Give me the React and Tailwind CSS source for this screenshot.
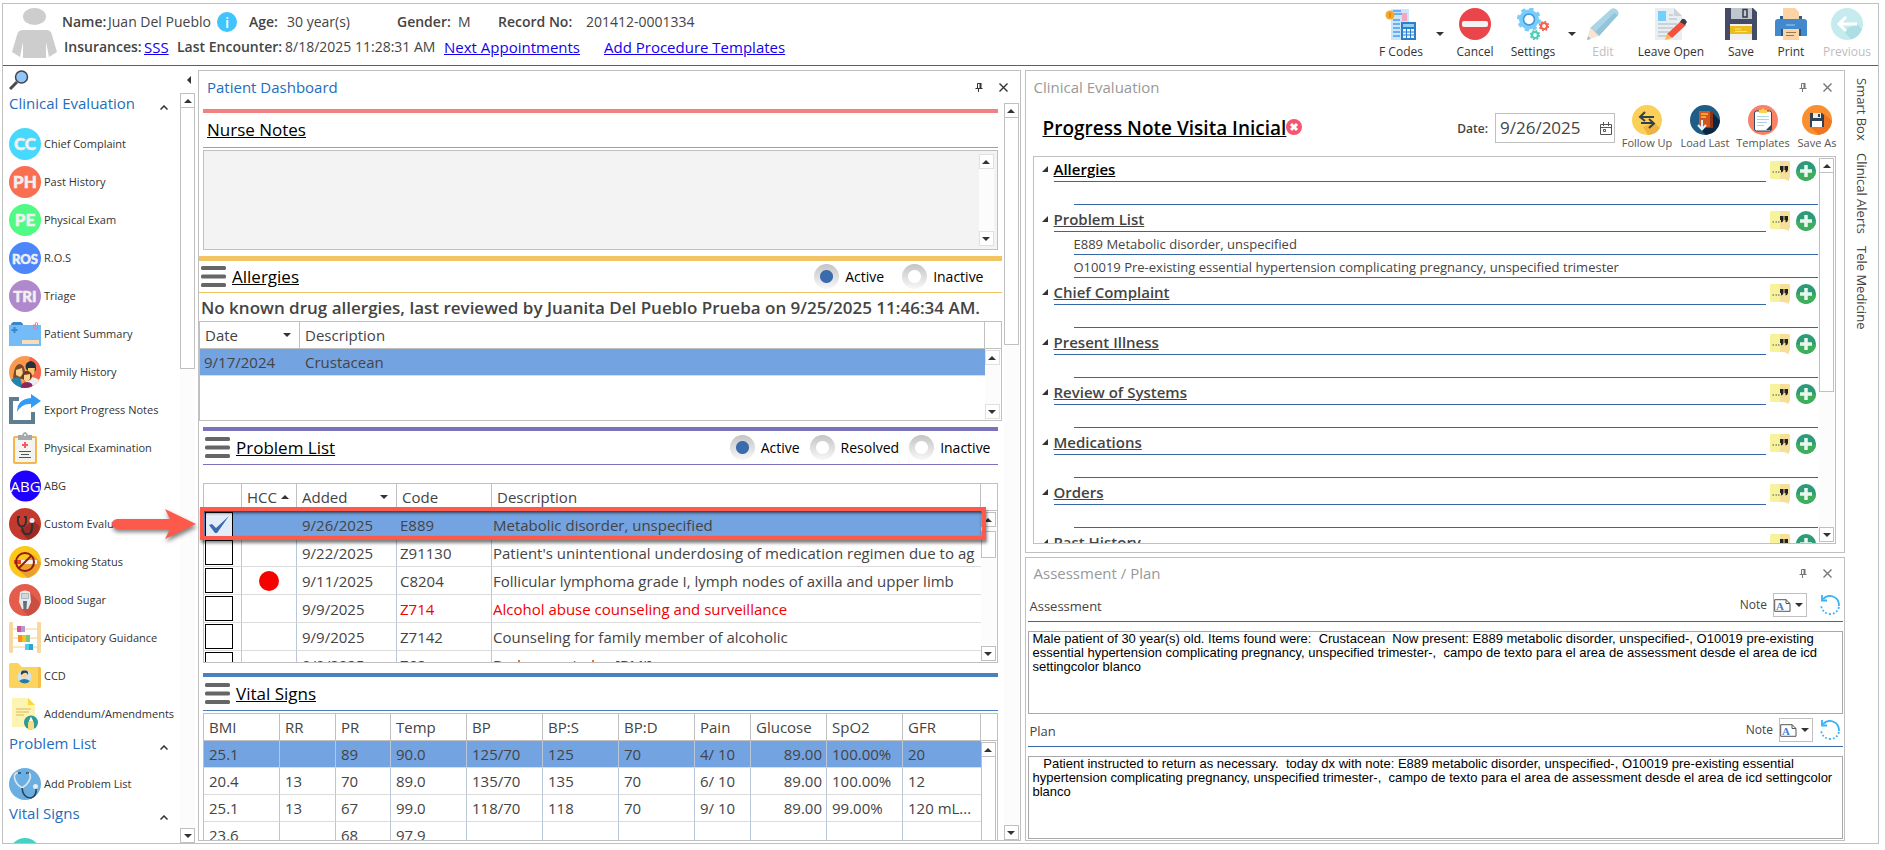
import React, { useState } from 'react';

const sidebarSections = [
  {
    title: 'Clinical Evaluation',
    items: [
      { label: 'Chief Complaint', icon: 'cc' },
      { label: 'Past History', icon: 'ph' },
      { label: 'Physical Exam', icon: 'pe' },
      { label: 'R.O.S', icon: 'ros' },
      { label: 'Triage', icon: 'tri' },
      { label: 'Patient Summary', icon: 'summary' },
      { label: 'Family History', icon: 'family' },
      { label: 'Export Progress Notes', icon: 'export' },
      { label: 'Physical Examination', icon: 'clipboard' },
      { label: 'ABG', icon: 'abg' },
      { label: 'Custom Evaluation', icon: 'custom' },
      { label: 'Smoking Status', icon: 'smoking' },
      { label: 'Blood Sugar', icon: 'sugar' },
      { label: 'Anticipatory Guidance', icon: 'abacus' },
      { label: 'CCD', icon: 'ccd' },
      { label: 'Addendum/Amendments', icon: 'addendum' },
    ],
  },
  { title: 'Problem List', items: [{ label: 'Add Problem List', icon: 'stethoscope' }] },
  { title: 'Vital Signs', items: [{ label: '', icon: 'vitals' }] },
];

const problems = [
  { hcc: false, added: '9/26/2025', code: 'E889', description: 'Metabolic disorder, unspecified' },
  { hcc: false, added: '9/22/2025', code: 'Z91130', description: "Patient's unintentional underdosing of medication regimen due to ag" },
  { hcc: true, added: '9/11/2025', code: 'C8204', description: 'Follicular lymphoma grade I, lymph nodes of axilla and upper limb' },
  { hcc: false, added: '9/9/2025', code: 'Z714', description: 'Alcohol abuse counseling and surveillance', alert: true },
  { hcc: false, added: '9/9/2025', code: 'Z7142', description: 'Counseling for family member of alcoholic' },
  { hcc: false, added: '9/9/2025', code: 'Z68', description: 'Body mass index [BMI]', alert: true },
];

const vitalColumns = ['BMI', 'RR', 'PR', 'Temp', 'BP', 'BP:S', 'BP:D', 'Pain', 'Glucose', 'SpO2', 'GFR'];
const vitals = [
  ['25.1', '', '89', '90.0', '125/70', '125', '70', '4/ 10', '89.00', '100.00%', '20'],
  ['20.4', '13', '70', '89.0', '135/70', '135', '70', '6/ 10', '89.00', '100.00%', '12'],
  ['25.1', '13', '67', '99.0', '118/70', '118', '70', '9/ 10', '89.00', '99.00%', '120 mL...'],
  ['23.6', '', '68', '97.9', '', '', '', '', '', '', ''],
];

const noteSections = [
  { title: 'Allergies', lines: [''] },
  {
    title: 'Problem List',
    lines: [
      'E889 Metabolic disorder, unspecified',
      'O10019 Pre-existing essential hypertension complicating pregnancy, unspecified trimester',
    ],
  },
  { title: 'Chief Complaint', lines: [''] },
  { title: 'Present Illness', lines: [''] },
  { title: 'Review of Systems', lines: [''] },
  { title: 'Medications', lines: [''] },
  { title: 'Orders', lines: [''] },
  { title: 'Past History', lines: [''] },
];

/* ---------- small glyphs ---------- */

function Caret({ up, className = '' }) {
  return (
    <svg viewBox="0 0 8 4" className={`w-2 h-1 shrink-0 ${className}`} fill="#333">
      <path d={up ? 'M0 4L4 0L8 4Z' : 'M0 0L4 4L8 0Z'} />
    </svg>
  );
}

function Pin() {
  return (
    <svg viewBox="0 0 8 9" className="w-2 h-[9px]" fill="none" stroke="currentColor">
      <path d="M2.5 5V.5H6M.5 5.5H7.5M3.5 6V9" />
      <path d="M5.5 0V5" strokeWidth="2" />
    </svg>
  );
}

function Cross() {
  return (
    <svg viewBox="0 0 9 9" className="w-[9px] h-[9px]" fill="none" stroke="currentColor" strokeWidth="1.4">
      <path d="M.5 .5L8.5 8.5M8.5 .5L.5 8.5" />
    </svg>
  );
}

function ScrollBar({ thumb = '', edge = 'border-[#c0c0c0]', className = '' }) {
  return (
    <div className={`flex flex-col w-[15px] shrink-0 bg-[#fcfcfc] ${className}`}>
      <button className={`flex items-center justify-center h-[15px] shrink-0 bg-white border ${edge}`} aria-label="Scroll up">
        <Caret up />
      </button>
      {thumb && <div className={`-mt-px bg-white border ${edge} ${thumb}`}></div>}
      <div className="flex-1"></div>
      <button className={`flex items-center justify-center h-[15px] shrink-0 bg-white border ${edge}`} aria-label="Scroll down">
        <Caret />
      </button>
    </div>
  );
}

function Menu() {
  return (
    <button aria-label="Menu" className="w-[25px] h-[21px] shrink-0">
      <svg viewBox="0 0 25 21" fill="#666">
        <rect width="25" height="4" rx="1.5" />
        <rect y="8.5" width="25" height="4" rx="1.5" />
        <rect y="17" width="25" height="4" rx="1.5" />
      </svg>
    </button>
  );
}

/* ---------- sidebar icons ---------- */

function Badge({ fill, text, size = 15 }) {
  return (
    <svg viewBox="0 0 32 32" className="w-8 h-8 shrink-0">
      <circle cx="16" cy="16" r="16" fill={fill} />
      <text x="16" y="21.5" fontSize={size} fontWeight="900" fontFamily="Lato, sans-serif" fill="#f0f0f0" stroke="#f0f0f0" strokeWidth=".5" textAnchor="middle">{text}</text>
    </svg>
  );
}

const sidebarIcons = {
  cc: <Badge fill="#46d9fb" text="CC" size={17} />,
  ph: <Badge fill="#f96f51" text="PH" size={17} />,
  pe: <Badge fill="#4ffb84" text="PE" size={17} />,
  ros: <Badge fill="#4d86fb" text="ROS" size={13} />,
  tri: <Badge fill="#b088cc" text="TRI" size={15} />,
  vitals: <Badge fill="#45d1c4" text="" />,
  abg: (
    <svg viewBox="0 0 32 32" className="w-8 h-8 shrink-0">
      <circle cx="16.5" cy="16" r="15.5" fill="#1f00ff" />
      <text x="16.5" y="21.5" fontSize="15" fontFamily="Open Sans, sans-serif" fill="#fff" textAnchor="middle">ABG</text>
    </svg>
  ),
  summary: (
    <svg viewBox="0 0 32 32" className="w-8 h-8 shrink-0">
      <path d="M2 6L4 4H12L14 6V9H2Z" fill="#3a87c8" />
      <path d="M0 7H32V28H0Z" fill="#74bcf8" />
      <path d="M5.5 9V15M2.5 12H8.5" stroke="#3a87c8" strokeWidth="2" />
      <path d="M13 22H30V26H13Z" fill="#fbdcb4" />
      <path d="M25 6V10.5Q27 12.5 28.5 10.5V5Q27 3.5 26.5 5V9" fill="none" stroke="#e57e95" />
    </svg>
  ),
  family: (
    <svg viewBox="0 0 32 32" className="w-8 h-8 shrink-0">
      <clipPath id="familyClip"><circle cx="16" cy="16" r="16" /></clipPath>
      <g clipPath="url(#familyClip)">
        <path d="M0 0H32V32H0Z" fill="#fb9a4e" />
        <path d="M21 0H32V32H14Z" fill="#f8674b" />
        <path d="M16 30Q16 21 23 21Q31 22 32 29V32H16Z" fill="#efefef" />
        <path d="M17 13Q15 6 22 5Q28 6 27 14L23 18Z" fill="#27303f" />
        <path d="M19 12H26L25 18L22 20L19 17Z" fill="#fcc568" />
        <path d="M4 23Q5 8 11 8Q17 9 16 23Z" fill="#7b4a2a" />
        <path d="M7 14L13 12L14 18L11 21L7 19Z" fill="#fdd28a" />
        <path d="M2 24Q6 20 11 22L14 32H2Z" fill="#2183ae" />
        <circle cx="18" cy="20" r="5" fill="#6d3a26" />
        <path d="M15 19L21 18V23L18 26L15 24Z" fill="#fdd28a" />
        <path d="M12 32Q12 26 18 26Q24 26 24 32Z" fill="#8b285b" />
      </g>
    </svg>
  ),
  export: (
    <svg viewBox="0 0 32 32" className="w-8 h-8 shrink-0">
      <path d="M10 5H2V28H24V18" fill="none" stroke="#5d7e90" strokeWidth="4" />
      <path d="M8 18Q8 5 22 4V0L32 7L22 14V10Q13 9 8 18Z" fill="#339af8" />
    </svg>
  ),
  clipboard: (
    <svg viewBox="0 0 32 32" className="w-8 h-8 shrink-0">
      <rect x="5" y="5" width="22" height="26" rx="1" fill="#f3f3f0" stroke="#f6b64a" strokeWidth="2" />
      <path d="M9 3H13Q16 -3 19 3H23V8H9Z" fill="#a2a8ac" />
      <circle cx="16" cy="3" r="1" fill="#fff" />
      <path d="M16 10V16M13 13H19" stroke="#f25a6a" strokeWidth="2" />
      <path d="M10 19.5H22M12 22.5H20M10 25.5H22" stroke="#4a565e" />
    </svg>
  ),
  custom: (
    <svg viewBox="0 0 32 32" className="w-8 h-8 shrink-0">
      <circle cx="16" cy="16" r="16" fill="#c4392e" />
      <path d="M24 12L31 19Q29 29 19 32L11 23Z" fill="#9c2b25" />
      <path d="M11 9H9Q8 18 13 18.5Q18 18 17 9H15M13 19Q14 28 20 26Q24 24 23 14" fill="none" stroke="#30302f" strokeWidth="2" />
      <circle cx="23" cy="12.5" r="2.5" fill="#e9e9e9" />
    </svg>
  ),
  smoking: (
    <svg viewBox="0 0 32 32" className="w-8 h-8 shrink-0">
      <circle cx="16" cy="16" r="16" fill="#fcc81c" />
      <path d="M25 9L32 17Q29 29 19 32L9 24Z" fill="#eaa030" />
      <path d="M5 14H12V18H5Z" fill="#e2452f" />
      <path d="M12 14H28V18H12Z" fill="#f1f1f1" />
      <circle cx="16" cy="16" r="9" fill="none" stroke="#921c10" strokeWidth="2" />
      <path d="M22 10L10 22" stroke="#921c10" strokeWidth="2" />
    </svg>
  ),
  sugar: (
    <svg viewBox="0 0 32 32" className="w-8 h-8 shrink-0">
      <circle cx="16" cy="16" r="16" fill="#e45c4c" />
      <path d="M21 8L31 19Q28 29 19 32L13 25Z" fill="#c84f41" />
      <path d="M11 8Q16 5 21 8L22 18L19 25H13L10 18Z" fill="#e8eaea" />
      <path d="M12 9H20V15H12Z" fill="#a9bac4" />
      <path d="M14 17H18L17.5 25H14.5Z" fill="#5d7180" />
      <path d="M13 11H19M13 13H19" stroke="#f6f6f6" />
    </svg>
  ),
  abacus: (
    <svg viewBox="0 0 32 32" className="w-8 h-8 shrink-0">
      <path d="M4 7H28M4 16H28M4 25H28" stroke="#f1d089" />
      <rect width="4" height="31" rx="1" fill="#f5d9a0" />
      <rect x="28" width="4" height="31" rx="1" fill="#f5d9a0" />
      <rect x="8" y="4" width="4" height="6" fill="#cc56a1" />
      <rect x="12" y="4" width="4" height="6" fill="#b697cf" />
      <rect x="9" y="13" width="4" height="7" fill="#f98e26" />
      <rect x="13" y="13" width="4" height="7" fill="#fbbf23" />
      <rect x="17" y="13" width="4" height="7" fill="#7bc67a" />
      <rect x="16" y="22" width="4" height="6" fill="#4bcdee" />
      <rect x="20" y="22" width="4" height="6" fill="#2aa6cf" />
    </svg>
  ),
  ccd: (
    <svg viewBox="0 0 32 32" className="w-8 h-8 shrink-0">
      <path d="M0 5Q0 3 2 3H9L13 7H30Q32 7 32 9V26Q32 28 30 28H2Q0 28 0 26Z" fill="#fcd35f" />
      <path d="M29 7H30Q32 7 32 9V26Q32 28 30 28H29Z" fill="#f7bd45" />
      <circle cx="15.5" cy="17" r="7" fill="#cbe6f0" />
      <path d="M10 21Q15 17 21 21Q16 26 10 21Z" fill="#2b7a9b" />
      <circle cx="15.5" cy="15" r="3" fill="#fbd19c" />
      <path d="M12 15Q11 10 15.5 10.5Q20 10 19 15Q18 12 15 13Z" fill="#2c4152" />
    </svg>
  ),
  addendum: (
    <svg viewBox="0 0 32 32" className="w-8 h-8 shrink-0">
      <path d="M3 0H19L26 7V29H3Z" fill="#fdf3b3" />
      <path d="M19 0L26 7H19Z" fill="#fbd83c" />
      <path d="M7 11H22M7 14H20M7 17H15" stroke="#d9b954" />
      <circle cx="22" cy="24.5" r="7" fill="#2c9c97" />
      <path d="M19 32V25L22 19L25 25V31Z" fill="#fbdb80" />
      <path d="M20 23L22 19L24 23Z" fill="#fff" />
    </svg>
  ),
  stethoscope: (
    <svg viewBox="0 0 32 32" className="w-8 h-8 shrink-0">
      <circle cx="16" cy="16" r="16" fill="#6bafe2" />
      <path d="M9 5H7Q3 9 9 17L13 20L17 17Q24 9 20 5H18" fill="none" stroke="#dfe7ec" strokeWidth="1.6" />
      <path d="M9 5H12M17 5H20M13 20Q14 30 22 30Q28 28 27 20" fill="none" stroke="#2d4356" strokeWidth="1.6" />
      <circle cx="26.5" cy="18.5" r="2.5" fill="#e5ebee" />
    </svg>
  ),
};

/* ---------- toolbar icons ---------- */

const toolbarIcons = {
  fcodes: (
    <svg viewBox="0 0 32 32" className="w-8 h-8">
      <path d="M6 1H24V32H6Z" fill="#c9e6fc" />
      <path d="M8 3H16M8 6H20M8 20H15M8 24H15M8 28H15M8 12H15M8 16H15" stroke="#4a9df0" strokeWidth="1.5" />
      <path d="M17 5H22V13H17Z" fill="#f6a5c1" />
      <circle cx="5" cy="7" r="4.5" fill="#f9a826" />
      <path d="M5 4.5V9.5" stroke="#c46f10" />
      <rect x="16" y="14" width="15" height="18" fill="#2d7fc9" />
      <path d="M18 16H29V19H18Z" fill="#8fd0f5" />
      <path d="M18 21H29V30H18Z" fill="#e9f5fd" />
      <path d="M21.5 21V30M25.5 21V30M18 24H29M18 27H29" stroke="#2d7fc9" />
    </svg>
  ),
  cancel: (
    <svg viewBox="0 0 32 32" className="w-8 h-8">
      <circle cx="16" cy="16" r="16" fill="#e9454b" />
      <rect x="3" y="13" width="26" height="6" rx="2" fill="#f3f3f3" />
    </svg>
  ),
  settings: (
    <svg viewBox="0 0 32 32" className="w-8 h-8" fill="none">
      <circle cx="12" cy="11.5" r="7.5" stroke="#79cdf8" strokeWidth="5" />
      <circle cx="12" cy="11.5" r="10.5" stroke="#79cdf8" strokeWidth="3" strokeDasharray="4.2 4.05" />
      <circle cx="12" cy="11.5" r="5.5" stroke="#4196df" strokeWidth="1.5" />
      <circle cx="27" cy="18" r="3" stroke="#f1634f" strokeWidth="2.2" />
      <circle cx="27" cy="18" r="4.5" stroke="#f1634f" strokeWidth="1.5" strokeDasharray="1.8 1.73" />
      <circle cx="18" cy="27" r="3" stroke="#4ecdb8" strokeWidth="2.2" />
      <circle cx="18" cy="27" r="4.5" stroke="#4ecdb8" strokeWidth="1.5" strokeDasharray="1.8 1.73" />
    </svg>
  ),
  edit: (
    <svg viewBox="0 0 32 32" className="w-8 h-8">
      <path d="M23 2Q25 -1 29 1Q33 4 31 7L12 28L3 20Z" fill="#a9d5e6" />
      <path d="M27 5L31 7L12 28L8 24Z" fill="#95c4d8" />
      <path d="M3 20L12 28L0 32Z" fill="#fbe3d3" />
      <path d="M1 28L4 31L0 32Z" fill="#a9bcc6" />
    </svg>
  ),
  leave: (
    <svg viewBox="0 0 32 32" className="w-8 h-8">
      <path d="M0 0H19L27 8V32H0Z" fill="#e9eef2" />
      <path d="M19 0L27 8H19Z" fill="#ccd2d8" />
      <rect x="3" y="3" width="8" height="10" fill="#72d0fb" />
      <path d="M14 7H18M14 11H22M3 16H22M3 20H18M3 24H14M3 28H12" stroke="#c2cad0" strokeWidth="1.5" />
      <path d="M26 13L31 17L17 30L12 26Z" fill="#f5513b" />
      <path d="M27 11Q30 10 32 14L30 17L25 14Z" fill="#3a3f47" />
      <path d="M12 26L17 30L10 32Z" fill="#f9b64b" />
    </svg>
  ),
  save: (
    <svg viewBox="0 0 32 32" className="w-8 h-8">
      <path d="M0 0H28L32 4V32H0Z" fill="#444b66" />
      <path d="M6 0H27V11H6Z" fill="#bfc6cc" />
      <path d="M18 1.5H22V9H18Z" fill="none" stroke="#343b50" strokeWidth="1.5" />
      <path d="M5 16H27V32H5Z" fill="#eef0f1" />
      <path d="M5 18H27V26H5Z" fill="#ecbc1c" />
      <path d="M10 21H16M10 23.5H22" stroke="#f8e38d" />
    </svg>
  ),
  print: (
    <svg viewBox="0 0 32 32" className="w-8 h-8">
      <path d="M8 0H20L24 4V12H8Z" fill="#fbd3a5" />
      <path d="M5 8H8V11H24V8H27V12H5Z" fill="#2f5c8f" />
      <path d="M0 14Q0 11 3 11H29Q32 11 32 14V28H0Z" fill="#4189cc" />
      <path d="M11 17H20" stroke="#9fd0f4" />
      <path d="M6 21H26V28H6Z" fill="#29557f" />
      <path d="M8 21H24V32H8Z" fill="#fbd3a5" />
      <path d="M11 24.5H21M11 27.5H19" stroke="#9c7850" />
    </svg>
  ),
  previous: (
    <svg viewBox="0 0 32 32" className="w-8 h-8">
      <circle cx="16" cy="16" r="16" fill="#c5ebee" />
      <path d="M26 16L31 21Q28 29 20 31.5L12 22Z" fill="#abdfe3" />
      <path d="M26 16H9M15 9L8 16L15 23" fill="none" stroke="#fff" strokeWidth="3" />
    </svg>
  ),
};

const noteIcons = {
  followUp: (
    <svg viewBox="0 0 30 30" className="w-[30px] h-[30px]">
      <circle cx="15" cy="15" r="15" fill="#fbcf58" />
      <path d="M22 18L28 23Q24 30 16 30L11 22Z" fill="#eeb345" />
      <path d="M22 12H9M13 7L8 12L13 16M9 18H21M17 14L22 18.5L17 23" fill="none" stroke="#33404c" strokeWidth="2" />
    </svg>
  ),
  loadLast: (
    <svg viewBox="0 0 30 30" className="w-[30px] h-[30px]">
      <circle cx="15" cy="15" r="15" fill="#1f5d86" />
      <path d="M22 7L30 16Q28 28 16 30L10 24Z" fill="#0d2640" />
      <path d="M9 6H20V22H9Z" fill="#d4541e" />
      <path d="M20 7H23V23H12V22H20Z" fill="#8c3516" />
      <path d="M11 9H18M11 12H16" stroke="#fbbf46" strokeWidth="1.5" />
      <path d="M12 15V24M8 20L12 24.5L16 20" fill="none" stroke="#d9f3ff" strokeWidth="2" />
    </svg>
  ),
  templates: (
    <svg viewBox="0 0 30 30" className="w-[30px] h-[30px]">
      <circle cx="15" cy="15" r="15" fill="#f88166" />
      <rect x="6.5" y="6" width="17" height="20" rx="2" fill="#fff" stroke="#31475c" />
      <path d="M11 5H13L15 3L17 5H19V8H11Z" fill="#fcd04e" />
      <path d="M9 11.5H21M9 14.5H21M9 17.5H19M9 20.5H16" stroke="#a9d4ea" />
      <path d="M23 20V25H18Z" fill="#31475c" />
    </svg>
  ),
  saveAs: (
    <svg viewBox="0 0 30 30" className="w-[30px] h-[30px]">
      <circle cx="15" cy="15" r="15" fill="#f98f2e" />
      <path d="M22 9L30 16Q28 28 17 30L8 22Z" fill="#ee7522" />
      <path d="M8 8H20L22 10V22H8Z" fill="#2f4354" />
      <path d="M11 8H19V13H11Z" fill="#e6ecf0" />
      <path d="M10 16H20V22H10Z" fill="#fff" />
      <path d="M16 9H18V12H16Z" fill="#2f4354" />
    </svg>
  ),
};

/* ---------- header ---------- */

function ToolButton({ icon, label, disabled, className = '' }) {
  return (
    <button disabled={disabled} className={`flex flex-col items-center text-[12px] leading-4 whitespace-nowrap text-[#333] disabled:text-[#bdbdbd] ${className}`}>
      {toolbarIcons[icon]}
      <span className="mt-1">{label}</span>
    </button>
  );
}

function Header() {
  return (
    <header className="flex justify-between h-[62px] shrink-0 border-b border-[#3766a8]">
      <div className="flex pl-[9px] pt-1">
        <svg viewBox="0 0 45 50" className="w-[45px] h-[50px]" fill="#cdcdcd">
          <ellipse cx="22.5" cy="8.5" rx="11.5" ry="8.5" />
          <path d="M11 22H34Q39 22 40 27L45 44L37 49L34 34V50H11V34L8 49L0 44L5 27Q6 22 11 22Z" />
        </svg>
        <div className="pl-[5px] text-[14px] leading-5 whitespace-nowrap">
          <div className="flex items-center h-[27px]">
            <b className="w-[46px] font-semibold">Name:</b>
            <span className="w-[109px]">Juan Del Pueblo</span>
            <button aria-label="Patient info" className="flex items-center justify-center w-5 h-5 rounded-full bg-[#3fc4fb] text-white text-[15px] font-semibold">i</button>
            <b className="ml-3 w-[38px] font-semibold">Age:</b>
            <span className="w-[110px]">30 year(s)</span>
            <b className="w-[61px] font-semibold">Gender:</b>
            <span className="w-10">M</span>
            <b className="w-[88px] font-semibold">Record No:</b>
            <span>201412-0001334</span>
          </div>
          <div className="flex items-center h-6 pl-0.5">
            <b className="w-20 font-semibold">Insurances:</b>
            <a href="#insurances" className="w-[33px] text-[15px] text-[#1500ee] underline">SSS</a>
            <b className="w-[108px] font-semibold">Last Encounter:</b>
            <span className="w-[159px]">8/18/2025 11:28:31 AM</span>
            <a href="#appointments" className="w-40 text-[15px] text-[#1500ee] underline">Next Appointments</a>
            <a href="#templates" className="text-[15px] text-[#1500ee] underline">Add Procedure Templates</a>
          </div>
        </div>
      </div>
      <div className="flex items-start pt-1 pr-1.5">
        <ToolButton icon="fcodes" label="F Codes" className="w-[46px]" />
        <button aria-label="More codes" className="flex items-center justify-center ml-2 mt-5 w-4 h-3"><Caret /></button>
        <ToolButton icon="cancel" label="Cancel" className="ml-1 w-[46px]" />
        <ToolButton icon="settings" label="Settings" className="ml-3 w-[46px]" />
        <button aria-label="More settings" className="flex items-center justify-center ml-2 mt-5 w-4 h-3"><Caret /></button>
        <ToolButton icon="edit" label="Edit" disabled className="ml-1.5 w-[34px]" />
        <ToolButton icon="leave" label="Leave Open" className="ml-[18px] w-[66px]" />
        <ToolButton icon="save" label="Save" className="ml-5 w-[34px]" />
        <ToolButton icon="print" label="Print" className="ml-4 w-[34px]" />
        <ToolButton icon="previous" label="Previous" disabled className="ml-3.5 w-[50px]" />
      </div>
    </header>
  );
}

/* ---------- sidebar ---------- */

function Sidebar() {
  return (
    <nav className="flex flex-col w-48 shrink-0 min-h-0">
      <div className="flex items-center justify-between h-[27px] shrink-0 pl-1.5 pr-1">
        <button aria-label="Search">
          <svg viewBox="0 0 20 20" className="w-5 h-5">
            <path d="M8 12L1 19" stroke="#4a4a4a" strokeWidth="3" />
            <circle cx="12.5" cy="7" r="6" fill="#8fc6fb" stroke="#444" strokeWidth="1.5" />
          </svg>
        </button>
        <button aria-label="Collapse">
          <svg viewBox="0 0 4 8" className="w-1 h-2" fill="#333"><path d="M4 0V8L0 4Z" /></svg>
        </button>
      </div>
      <div className="flex flex-1 min-h-0">
        <div className="flex-1 min-w-0 overflow-hidden">
          {sidebarSections.map((section) => (
            <section key={section.title}>
              <h2 className="flex items-start justify-between h-8 pl-1.5 pr-3 text-[15px] leading-5 text-[#1f6dbd]">
                {section.title}
                <svg viewBox="0 0 8 5" className="w-2 h-[5px] mt-3" fill="none" stroke="#333" strokeWidth="1.5"><path d="M.5 4.5L4 1L7.5 4.5" /></svg>
              </h2>
              {section.items.map((item) => (
                <button key={item.icon} className="flex items-center gap-[3px] w-full h-[38px] pl-1.5 text-[11px] text-[#333] whitespace-nowrap">
                  {sidebarIcons[item.icon]}
                  {item.label}
                </button>
              ))}
            </section>
          ))}
        </div>
        <ScrollBar thumb="h-[262px]" />
      </div>
    </nav>
  );
}

/* ---------- dashboard ---------- */

function PanelTitle({ children, active, className = '' }) {
  return (
    <div className={`flex items-center h-8 shrink-0 pl-2 pr-3 text-[15px] ${active ? 'text-[#333]' : 'text-[#777]'} ${className}`}>
      <h2 className={`flex-1 ${active ? 'text-[#1f6dbd]' : 'text-[#999]'}`}>{children}</h2>
      <button aria-label="Pin"><Pin /></button>
      <button aria-label="Close" className="ml-4"><Cross /></button>
    </div>
  );
}

function Radio({ name, label, defaultChecked, className = '' }) {
  return (
    <label className={`flex items-center gap-1.5 text-[14px] text-black ${className}`}>
      <input
        type="radio"
        name={name}
        defaultChecked={defaultChecked}
        className="appearance-none w-[25px] h-[25px] rounded-full bg-[radial-gradient(circle,#fff_6px,transparent_7px),linear-gradient(#c4c4c4,#f8f8f8)] checked:bg-[radial-gradient(circle,#3a6bad_6px,transparent_7px),linear-gradient(#c4c4c4,#f8f8f8)]"
      />
      {label}
    </label>
  );
}

const th = 'h-[27px] pl-[5px] pr-1 border-r border-b border-[#c0c0c0] text-left font-normal overflow-hidden';
const grid = 'w-full table-fixed border-separate border-spacing-0 text-[15px] leading-5 whitespace-nowrap';

function Dashboard() {
  const [checked, setChecked] = useState([0]);

  const toggle = (i) => {
    setChecked(checked.includes(i) ? checked.filter((c) => c !== i) : [...checked, i]);
  };

  return (
    <section className="flex flex-col flex-1 min-w-0 mt-1 mb-0.5 border border-[#c0c0c0]">
      <PanelTitle active>Patient Dashboard</PanelTitle>
      <div className="flex flex-1 min-h-0">
        <div className="flex flex-col flex-1 min-w-0 min-h-0 overflow-hidden mr-0.5">
          {/* Nurse notes */}
          <div className="mx-1 mt-1.5 shrink-0">
            <div className="flex items-center h-[39px] pl-1 border-t-4 border-b border-[#f38080]">
              <h3 className="text-[17px] leading-6 text-black underline">Nurse Notes</h3>
            </div>
            <div className="flex mt-0.5 h-[100px] p-[3px] border border-[#c0c0c0] bg-[#f3f3f3]">
              <textarea aria-label="Nurse Notes" readOnly className="flex-1 resize-none outline-none bg-transparent"></textarea>
              <ScrollBar edge="border-[#e0e0e0]" />
            </div>
          </div>

          {/* Allergies */}
          <div className="mt-1.5 shrink-0">
            <div className="flex items-center h-[37px] pl-0.5 pr-[18px] border-t-[5px] border-b border-[#f2c464]">
              <Menu />
              <h3 className="flex-1 pl-1.5 text-[17px] leading-6 text-black underline">Allergies</h3>
              <Radio name="allergies" label="Active" defaultChecked />
              <Radio name="allergies" label="Inactive" className="ml-[18px]" />
            </div>
            <p className="h-7 pl-0.5 text-[17px] leading-[29px] font-semibold whitespace-nowrap">
              No known drug allergies, last reviewed by Juanita Del Pueblo Prueba on 9/25/2025 11:46:34 AM.
            </p>
            <div className="flex h-[100px] border border-[#c0c0c0]">
              <div className="flex-1 min-w-0">
                <table className={grid}>
                  <thead>
                    <tr>
                      <th className={`${th} w-[100px]`}><span className="flex items-center justify-between pr-1">Date <Caret /></span></th>
                      <th className={th}>Description</th>
                    </tr>
                  </thead>
                  <tbody>
                    <tr className="bg-[#74a3e1]">
                      <td className="h-[27px] pl-1 border-b border-[#dcdcdc]">9/17/2024</td>
                      <td className="pl-[5px] border-b border-[#dcdcdc]">Crustacean</td>
                    </tr>
                  </tbody>
                </table>
              </div>
              <div className="flex flex-col w-4">
                <div className="h-[27px] border-b border-[#c0c0c0]"></div>
                <ScrollBar edge="border-[#e0e0e0]" className="flex-1 my-px" />
              </div>
            </div>
          </div>

          {/* Problem list */}
          <div className="mx-1 mt-1.5 shrink-0">
            <div className="flex items-center h-[38px] pl-0.5 pr-[7px] border-t-4 border-b border-[#7a72bb]">
              <Menu />
              <h3 className="flex-1 pl-1.5 text-[17px] leading-6 text-black underline">Problem List</h3>
              <Radio name="problems" label="Active" defaultChecked />
              <Radio name="problems" label="Resolved" className="ml-2.5" />
              <Radio name="problems" label="Inactive" className="ml-2.5" />
            </div>
            <div className="relative mt-[18px]">
              <div className="flex h-[180px] border border-[#c0c0c0] overflow-hidden">
                <div className="flex-1 min-w-0">
                  <table className={grid}>
                    <thead>
                      <tr>
                        <th className={`${th} w-[38px]`} aria-label="Selected"></th>
                        <th className={`${th} w-[55px]`}><span className="flex items-center gap-1">HCC <Caret up /></span></th>
                        <th className={`${th} w-[100px]`}><span className="flex items-center justify-between pr-1">Added <Caret /></span></th>
                        <th className={`${th} w-[95px]`}>Code</th>
                        <th className={th}>Description</th>
                      </tr>
                    </thead>
                    <tbody>
                      {problems.map((p, i) => (
                        <tr key={p.code} className={i === 0 ? 'bg-[#74a3e1]' : ''}>
                          <td className={`h-7 p-0 pl-px border-b border-[#dcdcdc] ${i === 0 ? '' : 'border-r border-r-[#b9c7d9]'}`}>
                            <span className="relative flex">
                              <input
                                type="checkbox"
                                aria-label={p.description}
                                checked={checked.includes(i)}
                                onChange={() => toggle(i)}
                                className="appearance-none w-7 h-[25px] border border-black bg-white checked:bg-[#e3ecf9]"
                              />
                              {checked.includes(i) && (
                                <svg viewBox="0 0 20 17" className="absolute left-1 top-1 w-5 h-[17px] pointer-events-none" fill="#3a6bad"><path d="M0 9L3 8L7 12L20 0L8 17H6Z" /></svg>
                              )}
                            </span>
                          </td>
                          <td className={`border-b border-[#dcdcdc] ${i === 0 ? '' : 'border-r border-r-[#b9c7d9]'}`}>
                            {p.hcc && <span className="block mx-auto w-5 h-5 rounded-full bg-[#f80000]"></span>}
                          </td>
                          <td className={`pl-[5px] border-b border-[#dcdcdc] ${i === 0 ? '' : 'border-r border-r-[#b9c7d9]'}`}>{p.added}</td>
                          <td className={`pl-[3px] border-b border-[#dcdcdc] ${i === 0 ? '' : 'border-r border-r-[#b9c7d9]'} ${p.alert ? 'text-[#f00000]' : ''}`}>{p.code}</td>
                          <td className={`pl-px border-b border-[#dcdcdc] overflow-hidden ${p.alert ? 'text-[#f00000]' : ''}`}>{p.description}</td>
                        </tr>
                      ))}
                    </tbody>
                  </table>
                </div>
                <div className="flex flex-col w-4">
                  <div className="h-[27px] shrink-0 border-b border-[#c0c0c0]"></div>
                  <ScrollBar thumb="mt-1 h-[27px]" className="flex-1 my-px" />
                </div>
              </div>
              {/* highlight on the selected problem */}
              <div className="absolute -left-[3px] right-3 top-6 h-[33px] border-4 border-[#fd5a4b] shadow-[1px_3px_3px_rgba(0,0,0,0.5),inset_0_2px_3px_rgba(0,0,0,0.6)] pointer-events-none"></div>
            </div>
          </div>

          {/* Vital signs */}
          <div className="flex flex-col flex-1 min-h-0 mx-1 mt-2.5">
            <div className="flex items-center h-[38px] shrink-0 pl-0.5 border-t-4 border-b border-[#4a80c0]">
              <Menu />
              <h3 className="pl-1.5 text-[17px] leading-6 text-black underline">Vital Signs</h3>
            </div>
            <div className="flex flex-1 min-h-0 mt-0.5 border border-b-0 border-[#c0c0c0] overflow-hidden">
              <div className="flex-1 min-w-0">
                <table className={grid}>
                  <colgroup>
                    <col className="w-[76px]" />
                    <col className="w-14" />
                    <col className="w-[55px]" />
                    <col className="w-[76px]" />
                    <col className="w-[76px]" />
                    <col className="w-[76px]" />
                    <col className="w-[76px]" />
                    <col className="w-14" />
                    <col className="w-[76px]" />
                    <col className="w-[76px]" />
                    <col />
                  </colgroup>
                  <thead>
                    <tr>
                      {vitalColumns.map((c) => <th key={c} className={th}>{c}</th>)}
                    </tr>
                  </thead>
                  <tbody>
                    {vitals.map((row, i) => (
                      <tr key={i} className={i === 0 ? 'bg-[#74a3e1]' : ''}>
                        {row.map((cell, j) => (
                          <td key={j} className={`h-[27px] pl-[5px] pr-1 border-b border-[#dcdcdc] ${j < 10 ? 'border-r border-r-[#b9c7d9]' : ''} ${j === 8 ? 'text-right' : ''}`}>{cell}</td>
                        ))}
                      </tr>
                    ))}
                  </tbody>
                </table>
              </div>
              <div className="flex flex-col w-4">
                <div className="h-[27px] shrink-0 border-b border-[#c0c0c0]"></div>
                <div className="flex flex-col flex-1 w-[15px] mt-px border border-b-0 border-[#c0c0c0]">
                  <button aria-label="Scroll up" className="flex items-center justify-center h-3.5 border-b border-[#c0c0c0]"><Caret up /></button>
                </div>
              </div>
            </div>
          </div>
        </div>
        <ScrollBar thumb="h-[228px]" className="mr-px" />
      </div>
    </section>
  );
}

/* ---------- progress note ---------- */

function NoteButton({ icon, label, className = 'w-[50px]' }) {
  return (
    <button className={`flex flex-col items-center text-[11px] leading-4 whitespace-nowrap text-[#555] ${className}`}>
      {noteIcons[icon]}
      {label}
    </button>
  );
}

function ProgressNote() {
  return (
    <section className="flex flex-col flex-1 min-h-0 border border-[#c0c0c0]">
      <PanelTitle>Clinical Evaluation</PanelTitle>
      <div className="flex items-start shrink-0 h-[53px] pl-[17px] pr-1.5">
        <h3 className="pt-[13px] text-[19px] leading-6 font-semibold text-black underline">Progress Note Visita Inicial</h3>
        <button aria-label="Remove note" className="mt-4">
          <svg viewBox="0 0 16 16" className="w-4 h-4">
            <circle cx="8" cy="8" r="8" fill="#f5566f" />
            <path d="M5 5L11 11M11 5L5 11" stroke="#fff" strokeWidth="3" />
          </svg>
        </button>
        <div className="flex-1"></div>
        <label htmlFor="noteDate" className="pt-4 pr-[7px] text-[12px] leading-5 font-semibold">Date:</label>
        <div className="flex items-center w-[120px] h-[30px] mt-2.5 pr-0.5 border border-[#c0c0c0]">
          <input id="noteDate" defaultValue="9/26/2025" className="flex-1 min-w-0 pl-1 text-[17px] outline-none" />
          <svg viewBox="0 0 12 13" className="w-3 h-[13px]" fill="none" stroke="#555">
            <path d="M.5 2.5H11.5V12.5H.5ZM.5 5.5H11.5M3.5 0V4M8.5 0V4M3.5 7.5H5.5V9.5H3.5Z" />
          </svg>
        </div>
        <div className="flex gap-2 pl-[7px] pt-0.5">
          <NoteButton icon="followUp" label="Follow Up" />
          <NoteButton icon="loadLast" label="Load Last" />
          <NoteButton icon="templates" label="Templates" />
          <NoteButton icon="saveAs" label="Save As" className="w-[42px]" />
        </div>
      </div>
      <div className="flex flex-1 min-h-0 ml-[7px] mr-2 mb-2 border border-[#c0c0c0]">
        <div className="flex-1 min-w-0 overflow-hidden -mt-0.5">
          {noteSections.map((s, i) => (
            <div key={s.title}>
              <div className="flex items-end h-[27px] pl-2 pr-0.5">
                <svg viewBox="0 0 6 6" className="w-1.5 h-1.5 mb-2.5 mr-1.5 shrink-0" fill="#333"><path d="M6 0V6H0Z" /></svg>
                <div className="flex flex-1 items-end h-full pb-px border-b border-[#3766a8]">
                  <h4 className={`text-[15px] leading-[22px] font-semibold underline ${i === 0 ? 'text-black' : 'text-[#444]'}`}>{s.title}</h4>
                </div>
                <button aria-label={`Comment on ${s.title}`} className="ml-1 mb-px">
                  <svg viewBox="0 0 20 20" className="w-5 h-5">
                    <path d="M1.5 0H10V18H1.5Q0 18 0 16.5V1.5Q0 0 1.5 0Z" fill="#f6f39c" />
                    <path d="M10 0H18.5Q20 0 20 1.5V16.5L19 18V20L14 18H10Z" fill="#f6df98" />
                    <path d="M2.5 11H4M5.5 11H7M8 11H9.5" stroke="#555" />
                    <path d="M10 5H13.5V9Q13 11 11 11.5V9H10ZM14.5 5H18V9Q17.5 11 15.5 11.5V9H14.5Z" fill="#222" />
                  </svg>
                </button>
                <button aria-label={`Add to ${s.title}`} className="ml-1.5 mb-px">
                  <svg viewBox="0 0 20 20" className="w-5 h-5">
                    <circle cx="10" cy="10" r="10" fill="#2b9b78" />
                    <path d="M0 10A10 10 0 0 0 20 10Z" fill="#3fae5c" />
                    <path d="M10 4V16M4 10H16" stroke="#eaf7ef" strokeWidth="3.5" />
                  </svg>
                </button>
              </div>
              {s.lines.map((line, n) => (
                <p key={n} className="ml-10 h-[23px] text-[13px] leading-6 whitespace-nowrap border-b border-[#3766a8]">{line}</p>
              ))}
            </div>
          ))}
        </div>
        <ScrollBar thumb="h-[220px]" className="m-px" />
      </div>
    </section>
  );
}

/* ---------- assessment / plan ---------- */

function NoteField({ id, label, text, gap = '' }) {
  return (
    <div>
      <div className="flex items-center h-[33px] pl-0.5 pr-[3px] border-b border-[#3766a8]">
        <label htmlFor={id} className="flex-1 pt-1 text-[13px]">{label}</label>
        <span className="text-[12px] pr-1.5">Note</span>
        <button aria-label={`${label} note`} className={`flex items-center gap-1 w-[34px] h-6 border border-[#c0c0c0] ${gap}`}>
          <svg viewBox="0 0 17 13" className="w-[17px] h-[13px]">
            <path d="M.7 .7H12L16 4.5V12.3H.7Z" fill="#fff" stroke="#555" />
            <path d="M12 .7V4.5H16" fill="none" stroke="#555" />
            <text x="2" y="10.5" fontSize="11" fontWeight="700" fontFamily="Liberation Serif, serif" fill="#3f82d2">A</text>
          </svg>
          <Caret />
        </button>
        <button aria-label={`Reset ${label}`}>
          <svg viewBox="0 0 20 20" className="w-5 h-5" fill="none" stroke="#38b2f6" strokeWidth="1.8">
            <path d="M3 4Q8 -1 14 2Q19 4 19 11" />
            <path d="M2 0V5.5H7" />
            <path d="M19 12Q17 19 10 19Q2 18 1 10" strokeDasharray="1.8 2" />
          </svg>
        </button>
      </div>
      <textarea
        id={id}
        defaultValue={text}
        className="block w-full h-[83px] mt-[9px] pl-1 border border-[#a8a8ac] resize-none outline-none overflow-hidden font-['Liberation_Sans',Arial,sans-serif] text-[13px] leading-[14px] text-black"
      />
    </div>
  );
}

function AssessmentPlan() {
  return (
    <section className="h-[284px] shrink-0 border border-[#c0c0c0]">
      <PanelTitle className="pb-px">Assessment / Plan</PanelTitle>
      <div className="pl-0.5 pr-px -mt-px">
        <NoteField
          id="assessment"
          label="Assessment"
          gap="mr-[13px]"
          text="Male patient of 30 year(s) old. Items found were:  Crustacean  Now present: E889 metabolic disorder, unspecified-, O10019 pre-existing essential hypertension complicating pregnancy, unspecified trimester-,  campo de texto para el area de assessment desde el area de icd settingcolor blanco"
        />
        <NoteField
          id="plan"
          label="Plan"
          gap="mr-[7px]"
          text="   Patient instructed to return as necessary.  today dx with note: E889 metabolic disorder, unspecified-, O10019 pre-existing essential hypertension complicating pregnancy, unspecified trimester-,  campo de texto para el area de assessment desde el area de icd settingcolor blanco"
        />
      </div>
    </section>
  );
}

export default function App() {
  return (
    <div className="h-screen bg-white pt-[3px] pl-0.5 pr-1.5 pb-1.5 font-['Open_Sans','Noto_Sans',sans-serif] text-[#444]">
      <div className="flex flex-col h-full border border-[#c0c0c0]">
        <Header />
        <main className="relative flex flex-1 min-h-0">
          <Sidebar />
          <div className="flex flex-1 min-w-0 gap-1 pl-[3px]">
            <Dashboard />
            <div className="flex flex-col flex-1 min-w-0 gap-1 mt-1 mb-0.5">
              <ProgressNote />
              <AssessmentPlan />
            </div>
          </div>
          <aside className="flex flex-col items-center gap-3 w-[33px] shrink-0 pt-3 text-[13px] leading-4">
            <button className="[writing-mode:vertical-rl]">Smart Box</button>
            <button className="[writing-mode:vertical-rl]">Clinical Alerts</button>
            <button className="[writing-mode:vertical-rl]">Tele Medicine</button>
          </aside>
          {/* arrow pointing at the selected problem */}
          <svg viewBox="0 0 90 36" className="absolute left-[107px] top-[441px] w-[90px] h-9 pointer-events-none drop-shadow-[1px_3px_2px_rgba(0,0,0,0.5)]" fill="#fd5a4b">
            <path d="M7 12H60L55 2L86 17L55 32L60 22H7Q2 21 2 17Q2 13 7 12Z" />
          </svg>
        </main>
      </div>
    </div>
  );
}
